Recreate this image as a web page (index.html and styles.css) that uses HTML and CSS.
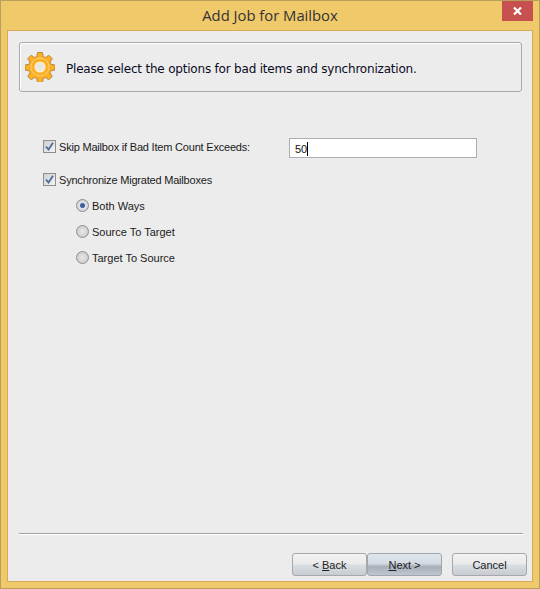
FILE: index.html
```html
<!DOCTYPE html>
<html lang="en">
<head>
  <meta charset="UTF-8">
  <title>Add Job for Mailbox</title>
  <link rel="stylesheet" href="styles.css">
</head>
<body>
  <div class="window">
    <div class="titlebar">
      <div class="title">Add Job for Mailbox</div>
      <div class="close">
        <svg width="9" height="8" viewBox="0 0 9 8"><path d="M1 0.5 L8 7.5 M8 0.5 L1 7.5" stroke="#fff" stroke-width="2.2" fill="none"/></svg>
      </div>
    </div>
    <div class="client">
      <div class="header">
        <svg class="gear" width="30" height="30" viewBox="0 0 30 30">
          <path d="M12.5 0.5h5l.7 4 2.3 1 3.3-2.3 3.5 3.5-2.3 3.3 1 2.3 4 .7v5l-4 .7-1 2.3 2.3 3.3-3.5 3.5-3.3-2.3-2.3 1-.7 4h-5l-.7-4-2.3-1-3.3 2.3-3.5-3.5 2.3-3.3-1-2.3-4-.7v-5l4-.7 1-2.3-2.3-3.3 3.5-3.5 3.3 2.3 2.3-1z" fill="#fbaf25" stroke="#b98a3a" stroke-width="1"/>
          <circle cx="15" cy="15" r="9" fill="none" stroke="#ffd27a" stroke-width="1"/>
          <circle cx="15" cy="15" r="4.8" fill="#e6e6e6" stroke="#fff0c8" stroke-width="1.5"/>
        </svg>
        <span class="header-text">Please select the options for bad items and synchronization.</span>
      </div>

      <div class="options">
        <div class="row row-skip">
          <label class="check-label"><span class="check"><svg width="9" height="9" viewBox="0 0 9 9"><path d="M1 4.5 L3.5 7.5 L8 0.8" stroke="#4a6a9e" stroke-width="1.8" fill="none"/></svg></span>Skip Mailbox if Bad Item Count Exceeds:</label>
          <div class="textbox">50<span class="caret"></span></div>
        </div>
        <div class="row row-sync">
          <label class="check-label"><span class="check"><svg width="9" height="9" viewBox="0 0 9 9"><path d="M1 4.5 L3.5 7.5 L8 0.8" stroke="#4a6a9e" stroke-width="1.8" fill="none"/></svg></span>Synchronize Migrated Mailboxes</label>
        </div>
        <div class="radios">
          <label class="radio-label"><span class="radio radio-on"></span>Both Ways</label>
          <label class="radio-label"><span class="radio"></span>Source To Target</label>
          <label class="radio-label"><span class="radio"></span>Target To Source</label>
        </div>
      </div>

      <div class="footer">
        <div class="rule"></div>
        <div class="buttons">
          <button class="btn" type="button">&lt; <u>B</u>ack</button>
          <button class="btn btn-next" type="button"><u>N</u>ext &gt;</button>
          <button class="btn btn-cancel" type="button">Cancel</button>
        </div>
      </div>
    </div>
  </div>
</body>
</html>
```

FILE: styles.css
```css
html, body {
  margin: 0;
  padding: 0;
  height: 100%;
  overflow: hidden;
}
.window {
  box-sizing: border-box;
  width: 540px;
  height: 589px;
  display: flex;
  flex-direction: column;
  background: #f0c96b;
  border: 1px solid #b99f5c;
  padding: 0 6px 6px 6px;
  font-family: "Liberation Sans", Arial, sans-serif;
  font-size: 11px;
  color: #1a1a1a;
}
.titlebar {
  height: 29px;
  flex: none;
  display: flex;
  justify-content: center;
  align-items: center;
  position: relative;
}
.title {
  font-family: "Open Sans", sans-serif;
  font-size: 14.8px;
  color: #333;
  padding-bottom: 2px;
}
.close {
  position: absolute;
  top: 0;
  right: 0;
  width: 31px;
  height: 20px;
  background: #c75050;
  display: flex;
  align-items: center;
  justify-content: center;
}
.client {
  flex: 1;
  display: flex;
  flex-direction: column;
  background: #ececec;
  border: 1px solid #d8aa58;
  padding: 11px 10px 0 11px;
}
.header {
  box-sizing: border-box;
  width: 503px;
  height: 50px;
  display: flex;
  align-items: center;
  gap: 11px;
  padding-left: 5px;
  border: 1px solid #a9a9a9;
  border-radius: 3px;
  box-shadow: inset 1px 1px 0 #fff;
}
.gear {
  flex: none;
}
.header-text {
  font-family: "DejaVu Sans", sans-serif;
  font-size: 12px;
  letter-spacing: -0.2px;
  color: #0a0a1e;
  white-space: nowrap;
  padding-top: 3px;
}
.options {
  flex: 1;
  padding: 46px 0 0 24px;
}
.row {
  display: flex;
  align-items: flex-start;
}
.row-sync {
  margin-top: 15px;
}
.check-label {
  display: flex;
  align-items: center;
  width: 246px;
  height: 13px;
  letter-spacing: -0.2px;
  white-space: nowrap;
}
.row-skip .check-label {
  margin-top: 2px;
}
.check {
  box-sizing: border-box;
  width: 13px;
  height: 13px;
  margin-right: 3px;
  background: linear-gradient(135deg, #cfcfcf, #f4f4f4);
  border: 1px solid #8e8e8e;
  display: flex;
  align-items: center;
  justify-content: center;
}
.textbox {
  box-sizing: border-box;
  width: 188px;
  height: 20px;
  background: #fff;
  border: 1px solid #abadb3;
  padding: 2px 5px 0 5px;
  display: flex;
  align-items: center;
  color: #111;
}
.caret {
  width: 1px;
  height: 14px;
  background: #000;
}
.radios {
  display: flex;
  flex-direction: column;
  gap: 13px;
  padding: 13px 0 0 33px;
}
.radio-label {
  display: flex;
  align-items: center;
  height: 13px;
  gap: 3px;
  white-space: nowrap;
}
.radio {
  box-sizing: border-box;
  width: 13px;
  height: 13px;
  border-radius: 50%;
  border: 1px solid #8e8e8e;
  background: radial-gradient(circle, #e8e8e8, #c4c4c4);
}
.radio-on {
  background: radial-gradient(circle, #3f5f9e 0 2px, #dfe3ea 3px, #c4c4c4 100%);
}
.footer {
  flex: none;
}
.rule {
  height: 1px;
  background: #a0a0a0;
  border-bottom: 1px solid #fff;
  margin-right: -1px;
}
.buttons {
  display: flex;
  justify-content: flex-end;
  margin-right: -5px;
  padding: 18px 0 5px 0;
}
.btn {
  box-sizing: border-box;
  width: 75px;
  height: 23px;
  padding: 0;
  font-family: "Liberation Sans", Arial, sans-serif;
  font-size: 11px;
  color: #222;
  border: 1px solid #a3a9ac;
  border-radius: 3px;
  background: linear-gradient(#f2f2f2 0, #ebebeb 45%, #d8dde1 55%, #c8ccd0 100%);
}
.btn-next {
  border-color: #9fa7ad;
  background: linear-gradient(#dfe5ec 0, #d5dbe3 45%, #a8afb8 60%, #bfc6cf 100%);
}
.btn-cancel {
  margin-left: 10px;
}
```
